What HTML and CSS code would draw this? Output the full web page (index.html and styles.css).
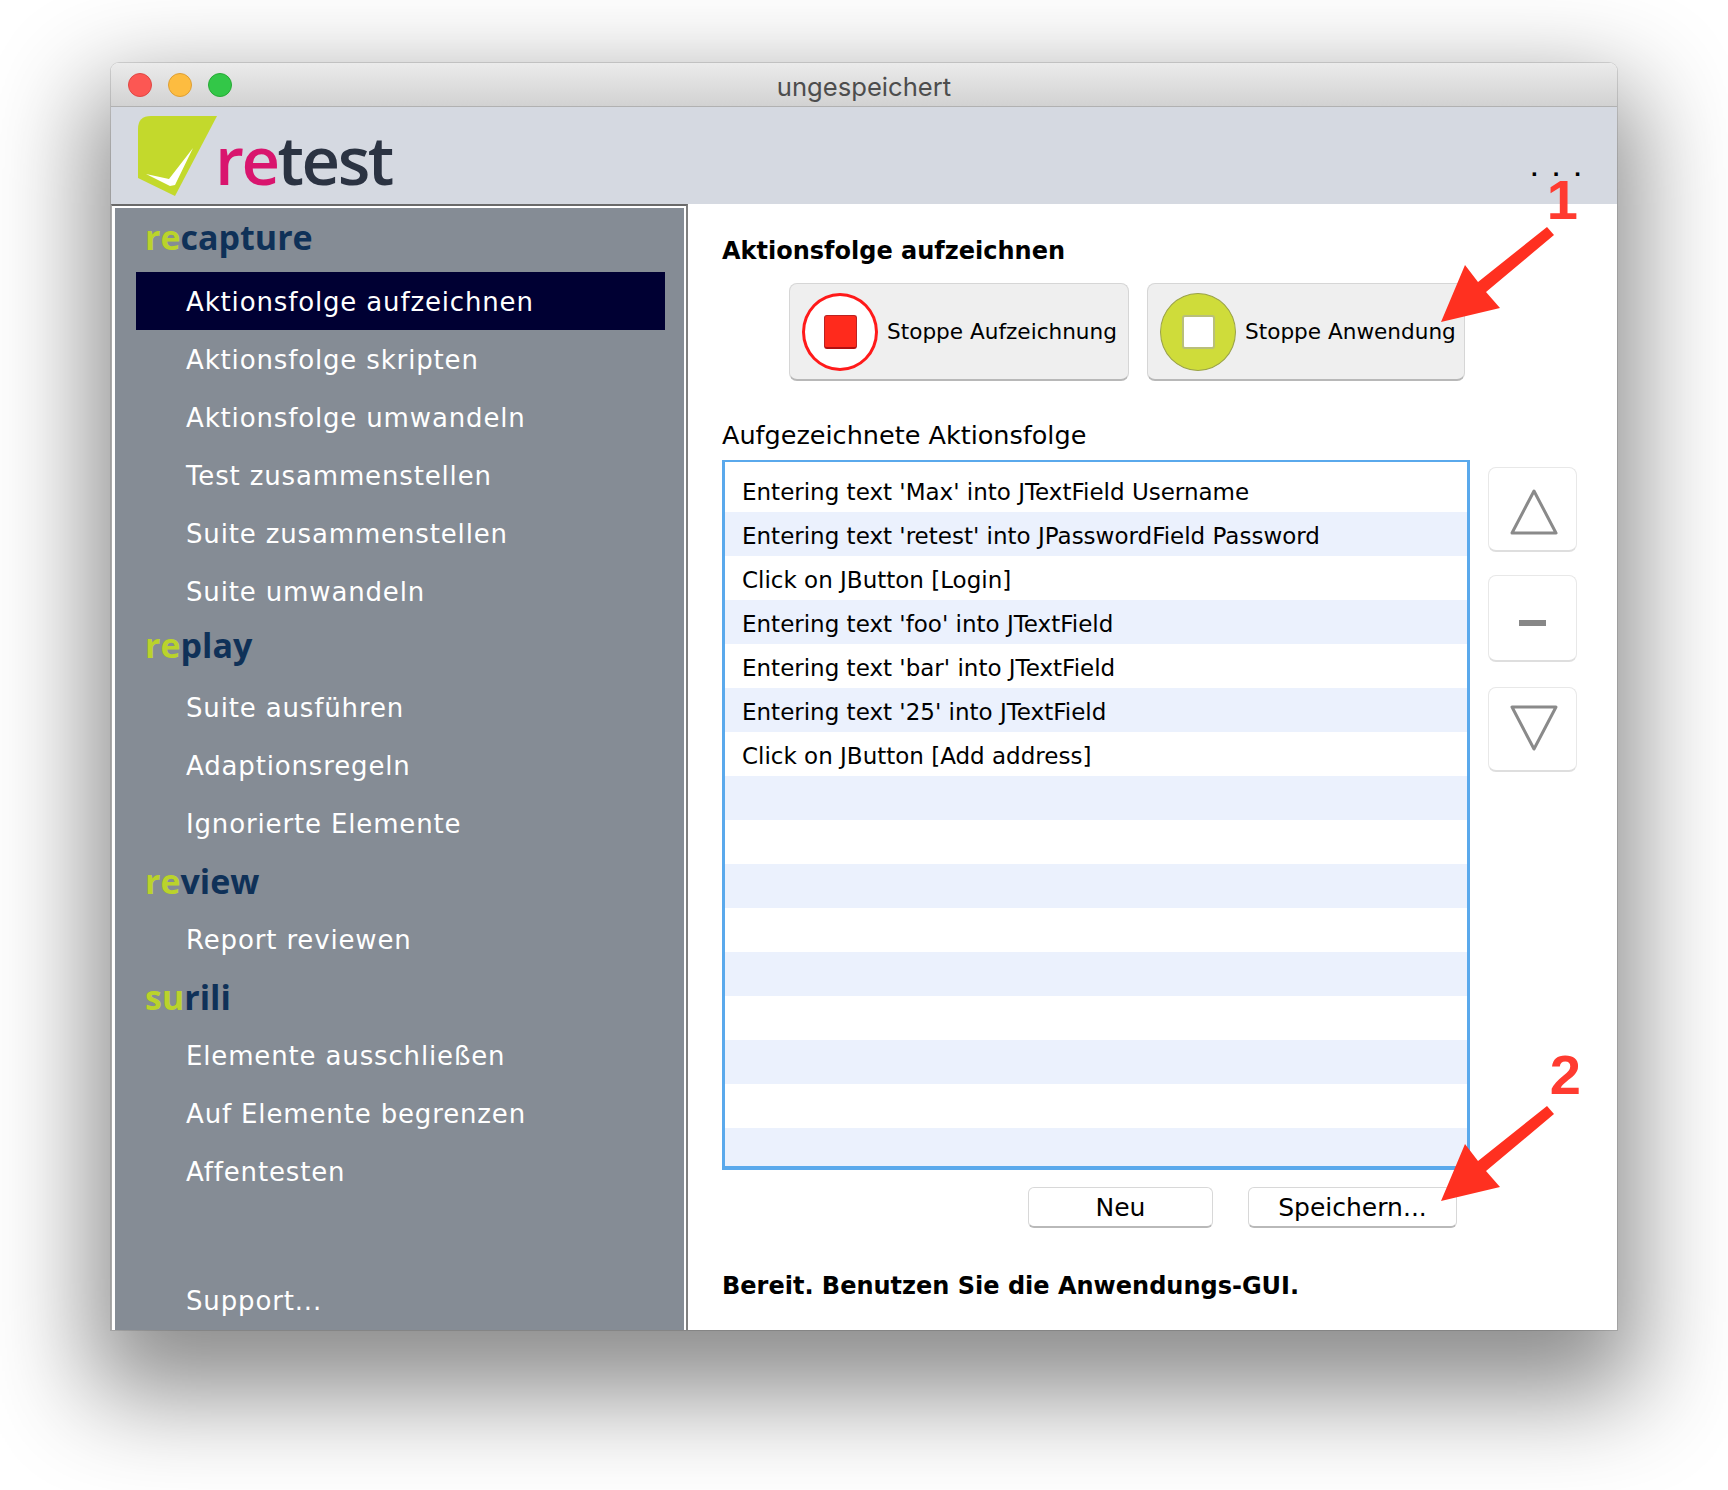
FILE: index.html
```html
<!DOCTYPE html>
<html lang="de">
<head>
  <meta charset="UTF-8" />
  <meta name="viewport" content="width=device-width, initial-scale=1.0" />
  <title>ungespeichert</title>
  <link rel="stylesheet" href="styles.css">
</head>
<body>

  <div class="window">
    <div class="titlebar">
      <span class="light light-red"></span>
      <span class="light light-yellow"></span>
      <span class="light light-green"></span>
      <span class="title">ungespeichert</span>
    </div>

    <div class="header">
      <svg class="logo-mark" width="84" height="84" viewBox="0 0 84 84">
        <path d="M0 13 Q0 0 13 0 L79 0 L37 80 L0 62 Z" fill="#c3d92c"/>
        <path d="M8 58 L31 63 L55 32 L37 69 L32 70 Z" fill="#fff"/>
      </svg>
      <span class="logo-text"><span class="logo-re">re</span>test</span>
      <span class="more">...</span>
    </div>

    <div class="content">
      <div class="sidebar">
        <div class="section section-first"><span class="re">re</span>capture</div>
        <div class="item item-active">Aktionsfolge aufzeichnen</div>
        <div class="item">Aktionsfolge skripten</div>
        <div class="item">Aktionsfolge umwandeln</div>
        <div class="item">Test zusammenstellen</div>
        <div class="item">Suite zusammenstellen</div>
        <div class="item">Suite umwandeln</div>
        <div class="section section-replay"><span class="re">re</span>play</div>
        <div class="item">Suite ausführen</div>
        <div class="item">Adaptionsregeln</div>
        <div class="item">Ignorierte Elemente</div>
        <div class="section"><span class="re">re</span>view</div>
        <div class="item">Report reviewen</div>
        <div class="section"><span class="re">su</span>rili</div>
        <div class="item">Elemente ausschließen</div>
        <div class="item">Auf Elemente begrenzen</div>
        <div class="item">Affentesten</div>
        <div class="item item-bottom">Support...</div>
      </div>

      <div class="main">
        <h2 class="main-title">Aktionsfolge aufzeichnen</h2>

        <div class="actions">
          <button class="action action-record">
            <span class="disc disc-red"><span class="square square-red"></span></span>
            Stoppe Aufzeichnung
          </button>
          <button class="action action-app">
            <span class="disc disc-green"><span class="square square-white"></span></span>
            Stoppe Anwendung
          </button>
        </div>

        <div class="list-title">Aufgezeichnete Aktionsfolge</div>

        <div class="list-row">
          <div class="list">
            <div class="row">Entering text 'Max' into JTextField Username</div>
            <div class="row">Entering text 'retest' into JPasswordField Password</div>
            <div class="row">Click on JButton [Login]</div>
            <div class="row">Entering text 'foo' into JTextField</div>
            <div class="row">Entering text 'bar' into JTextField</div>
            <div class="row">Entering text '25' into JTextField</div>
            <div class="row">Click on JButton [Add address]</div>
            <div class="row"></div>
            <div class="row"></div>
            <div class="row"></div>
            <div class="row"></div>
            <div class="row"></div>
            <div class="row"></div>
            <div class="row"></div>
            <div class="row"></div>
            <div class="row"></div>
          </div>

          <div class="side">
            <button class="side-btn side-up">
              <svg width="50" height="48" viewBox="0 0 50 48"><path d="M25 3 L47 45 L3 45 Z" fill="none" stroke="#8a8a8a" stroke-width="3" stroke-linejoin="round"/></svg>
            </button>
            <button class="side-btn side-minus"><span class="minus"></span></button>
            <button class="side-btn side-down">
              <svg width="50" height="48" viewBox="0 0 50 48"><path d="M3 3 L47 3 L25 45 Z" fill="none" stroke="#8a8a8a" stroke-width="3" stroke-linejoin="round"/></svg>
            </button>
          </div>
        </div>

        <div class="list-buttons">
          <button class="plain plain-new">Neu</button>
          <button class="plain plain-save">Speichern...</button>
        </div>

        <div class="status">Bereit. Benutzen Sie die Anwendungs-GUI.</div>
      </div>
    </div>

    <!-- screenshot annotations on top of the window -->
    <span class="mark mark-one">1</span>
    <span class="mark mark-two">2</span>
    <svg class="arrow arrow-one" width="110" height="110" viewBox="0 0 110 110">
      <path d="M106 4 L113 12 L45 69 L59 85 L0 99 L24 42 L37 59 Z" fill="#ff3020"/>
    </svg>
    <svg class="arrow arrow-two" width="110" height="110" viewBox="0 0 110 110">
      <path d="M106 4 L113 12 L45 69 L59 85 L0 99 L24 42 L37 59 Z" fill="#ff3020"/>
    </svg>
  </div>

</body>
</html>
```

FILE: styles.css
```css
body {
  margin: 0;
  padding: 63px 111px 160px;
  background: #fff;
  font-family: "DejaVu Sans", sans-serif;
  color: #000;
}
button {
  font-family: inherit;
  color: #000;
  cursor: pointer;
}

.window {
  position: relative;
  height: 1267px;
  display: flex;
  flex-direction: column;
  border-radius: 8px 8px 0 0;
  box-shadow: 0 45px 100px 20px rgba(0, 0, 0, 0.45), 0 0 0 1px rgba(0, 0, 0, 0.12);
}

.titlebar {
  position: relative;
  flex: 0 0 44px;
  display: flex;
  align-items: center;
  gap: 16px;
  padding-left: 17px;
  box-sizing: border-box;
  background: linear-gradient(#ebebeb, #d2d2d2);
  border-bottom: 1px solid #b1b1b1;
  border-radius: 8px 8px 0 0;
}
.light {
  width: 24px;
  height: 24px;
  border-radius: 50%;
  box-sizing: border-box;
}
.light-red { background: #fc5753; border: 1px solid #df4744; }
.light-yellow { background: #fdbc40; border: 1px solid #de9f34; }
.light-green { background: #33c748; border: 1px solid #27aa35; }
.title {
  position: absolute;
  left: 0;
  right: 0;
  padding-top: 3px;
  text-align: center;
  font-family: Inter, sans-serif;
  font-size: 25.6px;
  color: #4d4d4d;
}

.header {
  flex: 0 0 97px;
  display: flex;
  background: #d5d9e1;
}
.logo-mark {
  margin: 9px 0 0 27px;
}
.logo-text {
  margin: 10px 0 0 -7px;
  font-family: "Open Sans", sans-serif;
  font-weight: 600;
  font-size: 67px;
  line-height: 85px;
  letter-spacing: -2.5px;
  color: #2b3342;
}
.logo-re { color: #d9156e; }
.more {
  margin: 46px 0 0 auto;
  padding-right: 21px;
  font-family: "Liberation Sans", sans-serif;
  font-weight: bold;
  font-size: 24px;
  line-height: 30px;
  letter-spacing: 15px;
  height: 30px;
}

.content {
  flex: 1;
  display: flex;
  min-height: 0;
  background: #fff;
}

.sidebar {
  flex: 0 0 577px;
  box-sizing: border-box;
  display: flex;
  flex-direction: column;
  background: #858c95;
  border-top: 2px solid #6a6a6a;
  border-right: 2px solid #808080;
  border-left: 1px solid #a9a9a9;
  box-shadow: inset 3px 2px 0 #fff, inset -2px 0 0 #fff;
  color: #fff;
}
.section {
  height: 58px;
  line-height: 58px;
  padding-left: 33px;
  font-family: "Open Sans", sans-serif;
  font-size: 34px;
  font-weight: 700;
  color: #0f3158;
}
.section-first {
  height: 66px;
  line-height: 62px;
}
.section-replay {
  line-height: 50px;
}
.re { color: #bad32b; }
.item {
  height: 58px;
  line-height: 60px;
  margin: 0 21px 0 24px;
  padding-left: 50px;
  font-size: 26px;
  letter-spacing: 0.85px;
}
.item-active { background: #000033; }
.item-bottom { margin-top: auto; margin-bottom: 1px; }

.main {
  flex: 1;
  padding-left: 34px;
}
.main-title {
  margin: 0;
  padding-top: 30px;
  height: 49px;
  line-height: 34px;
  font-size: 24px;
  font-weight: bold;
}

.actions {
  display: flex;
  gap: 18px;
  margin-left: 67px;
}
.action {
  height: 98px;
  display: flex;
  align-items: center;
  gap: 9px;
  padding: 0 0 0 12px;
  background: #efefef;
  border: 1px solid #d6d6d6;
  border-bottom: 2px solid #b8b8b8;
  border-radius: 8px;
  font-size: 21.6px;
  white-space: nowrap;
}
.action-record { width: 340px; }
.action-app { width: 318px; }
.disc {
  flex: none;
  width: 76px;
  height: 78px;
  box-sizing: border-box;
  border-radius: 50%;
  display: flex;
  align-items: center;
  justify-content: center;
}
.disc-red { background: #fff; border: 3px solid #ff1a1a; }
.disc-green { background: #cfdc3a; border: 1px solid #9aa24a; }
.square {
  width: 33px;
  height: 34px;
  box-sizing: border-box;
  border-radius: 3px;
}
.square-red { background: #ff2a1c; border: 1px solid #b22; border-bottom: 2px solid #b01010; }
.square-white { background: #fff; border: 2px solid #b9bf7a; }

.list-title {
  height: 47px;
  margin-top: 32px;
  line-height: 44px;
  font-size: 25.5px;
}

.list-row {
  display: flex;
}
.list {
  flex: 0 0 748px;
  height: 710px;
  box-sizing: border-box;
  overflow: hidden;
  padding: 6px 0 0;
  border: 3px solid #5aa9ec;
  border-top-width: 2px;
  border-bottom-width: 4px;
}
.row {
  height: 44px;
  line-height: 48px;
  padding-left: 17px;
  font-size: 23px;
  white-space: nowrap;
}
.row:nth-child(even) { background: #ebf1fd; }

.side {
  display: flex;
  flex-direction: column;
  margin: 7px 0 0 18px;
}
.side-btn {
  width: 89px;
  display: flex;
  align-items: center;
  justify-content: center;
  padding: 0;
  background: #fff;
  border: 1px solid #e8e8e8;
  border-bottom: 2px solid #dedede;
  border-radius: 8px;
}
.side-up { height: 85px; margin-bottom: 23px; padding: 6px 0 0 2px; }
.side-minus { height: 87px; margin-bottom: 25px; }
.side-down { height: 85px; padding: 0 0 2px 2px; }
.minus {
  display: block;
  width: 27px;
  height: 6px;
  background: #878787;
  margin-top: 10px;
}

.list-buttons {
  display: flex;
  justify-content: flex-end;
  gap: 35px;
  margin: 17px 160px 0 0;
}
.plain {
  height: 41px;
  background: #fff;
  border: 1px solid #d8d8d8;
  border-bottom: 2px solid #b9b9b9;
  border-radius: 6px;
  font-size: 25px;
  padding: 0;
}
.plain-new { width: 185px; }
.plain-save { width: 209px; }

.status {
  margin-top: 38px;
  line-height: 40px;
  font-size: 24px;
  font-weight: bold;
}

/* annotations */
.mark {
  position: absolute;
  font-family: "Liberation Sans", sans-serif;
  font-weight: bold;
  font-size: 56px;
  line-height: 56px;
  color: #ff3b30;
}
.mark-one { top: 109px; right: 39px; }
.mark-two { top: 984px; right: 36px; }
.arrow {
  position: absolute;
  left: 1330px;
  overflow: visible;
}
.arrow-one { top: 160px; }
.arrow-two { top: 1039px; }
```
